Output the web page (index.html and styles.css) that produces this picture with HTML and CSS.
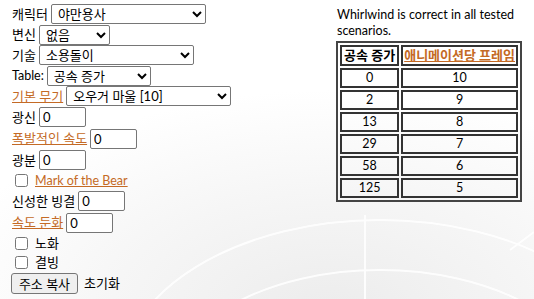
FILE: index.html
```html
<!DOCTYPE html>
<html lang="ko">
<head>
<meta charset="utf-8">
<link rel="stylesheet" href="styles.css">
</head>
<body>
<svg class="bg" width="534" height="299" viewBox="0 0 534 299" aria-hidden="true">
  <defs>
    <radialGradient id="g" cx="0.62" cy="1.05" r="0.75">
      <stop offset="0" stop-color="#ececec"/>
      <stop offset="0.55" stop-color="#f6f6f6"/>
      <stop offset="1" stop-color="#ffffff"/>
    </radialGradient>
  </defs>
  <rect width="534" height="299" fill="url(#g)"/>
  <g fill="none" stroke="#ffffff" stroke-width="2" opacity="0.9">
    <ellipse cx="380" cy="380" rx="260" ry="160"/>
    <ellipse cx="380" cy="390" rx="210" ry="120"/>
    <line x1="365" y1="215" x2="365" y2="299"/>
    <line x1="510" y1="250" x2="534" y2="232"/>
  </g>
</svg>
<div class="page">
  <div class="left">
    <div class="row"><span class="ko">캐릭터</span><select class="s1"><option>야만용사</option></select></div>
    <div class="row"><span class="ko">변신</span><select class="s2"><option>없음</option></select></div>
    <div class="row"><span class="ko">기술</span><select class="s3"><option>소용돌이</option></select></div>
    <div class="row"><span>Table:</span><select class="s4"><option>공속 증가</option></select></div>
    <div class="row"><a class="ko" href="#">기본 무기</a><select class="s5"><option>오우거 마울 [10]</option></select></div>
    <div class="row irow"><span class="ko">광신</span><input type="text" value="0"></div>
    <div class="row irow"><a class="ko" href="#">폭발적인 속도</a><input type="text" value="0"></div>
    <div class="row irow"><span class="ko">광분</span><input type="text" value="0"></div>
    <div class="row crow"><input type="checkbox"><a href="#">Mark of the Bear</a></div>
    <div class="row irow"><span class="ko">신성한 빙결</span><input type="text" value="0"></div>
    <div class="row irow"><a class="ko" href="#">속도 둔화</a><input type="text" value="0"></div>
    <div class="row crow"><input type="checkbox"><span class="ko">노화</span></div>
    <div class="row crow"><input type="checkbox"><span class="ko">결빙</span></div>
    <div class="row brow"><button type="button">주소 복사</button><span class="ko reset">초기화</span></div>
  </div>
  <div class="right">
    <p class="note">Whirlwind is correct in all tested scenarios.</p>
    <table class="frames">
      <tr><th>공속 증가</th><th><a href="#">애니메이션당 프레임</a></th></tr>
      <tr><td>0</td><td>10</td></tr>
      <tr><td>2</td><td>9</td></tr>
      <tr><td>13</td><td>8</td></tr>
      <tr><td>29</td><td>7</td></tr>
      <tr><td>58</td><td>6</td></tr>
      <tr><td>125</td><td>5</td></tr>
    </table>
  </div>
</div>
</body>
</html>
```

FILE: styles.css
```css
html, body {
  margin: 0;
  padding: 0;
  background: #fff;
}
body {
  font-family: Lato, "Noto Sans CJK KR", sans-serif;
  font-size: 12.5px;
  color: #000;
  position: relative;
  width: 534px;
  height: 299px;
  overflow: hidden;
}
.bg {
  position: absolute;
  left: 0;
  top: 0;
  z-index: 0;
}
.page {
  position: relative;
  z-index: 1;
  display: flex;
  padding: 4px 0 0 12px;
}
.left {
  width: 324px;
  display: flex;
  flex-direction: column;
}
.row {
  display: flex;
  align-items: center;
  gap: 3px;
  height: 20.5px;
  white-space: nowrap;
  line-height: 1;
}
.ko {
  font-size: 13px;
}
.irow { height: 21.5px; }
.crow { height: 19.5px; }
.brow { height: 22px; }
.reset { margin-left: 3px; }
a {
  color: #c46a25;
  text-decoration: underline;
}
select {
  font-family: Lato, "Noto Sans CJK KR", sans-serif;
  font-size: 13px;
  height: 20px;
  padding: 0 2px;
  margin: 0;
  border: 1px solid #767676;
  border-radius: 2px;
  background: #fff;
  color: #000;
}
.s1 { width: 155px; }
.s2 { width: 71px; }
.s3 { width: 155px; }
.s4 { width: 104px; }
.s5 { width: 165px; }
input[type="text"] {
  font-family: Lato, "Noto Sans CJK KR", sans-serif;
  font-size: 13px;
  width: 47px;
  height: 20px;
  box-sizing: border-box;
  padding: 0 3px;
  border: 1px solid #767676;
  border-radius: 2px;
  background: #fff;
  margin: 0;
}
input[type="checkbox"] {
  width: 13px;
  height: 13px;
  margin: 0 4px 0 3px;
}
button {
  font-family: Lato, "Noto Sans CJK KR", sans-serif;
  font-size: 13px;
  width: 67px;
  height: 21px;
  padding: 0;
  margin: 0 0 0 -1px;
  border: 1px solid #767676;
  border-radius: 3px;
  background: #efefef;
  color: #000;
}
.right {
  width: 186px;
  padding-top: 3px;
}
.note {
  margin: 0 0 2px 1px;
  line-height: 16px;
}
.frames {
  width: 186px;
  border: 2px solid #444;
  border-collapse: separate;
  border-spacing: 2px;
  text-align: center;
}
.frames th, .frames td {
  border: 2px solid #333;
  padding: 0 1px;
  height: 16px;
  line-height: 16px;
  white-space: nowrap;
}
.frames th {
  font-weight: bold;
  font-size: 13px;
  height: 17px;
  line-height: 17px;
}
.frames th:first-child, .frames td:first-child {
  width: 57px;
}
.frames th a {
  color: #c46a25;
}
```
